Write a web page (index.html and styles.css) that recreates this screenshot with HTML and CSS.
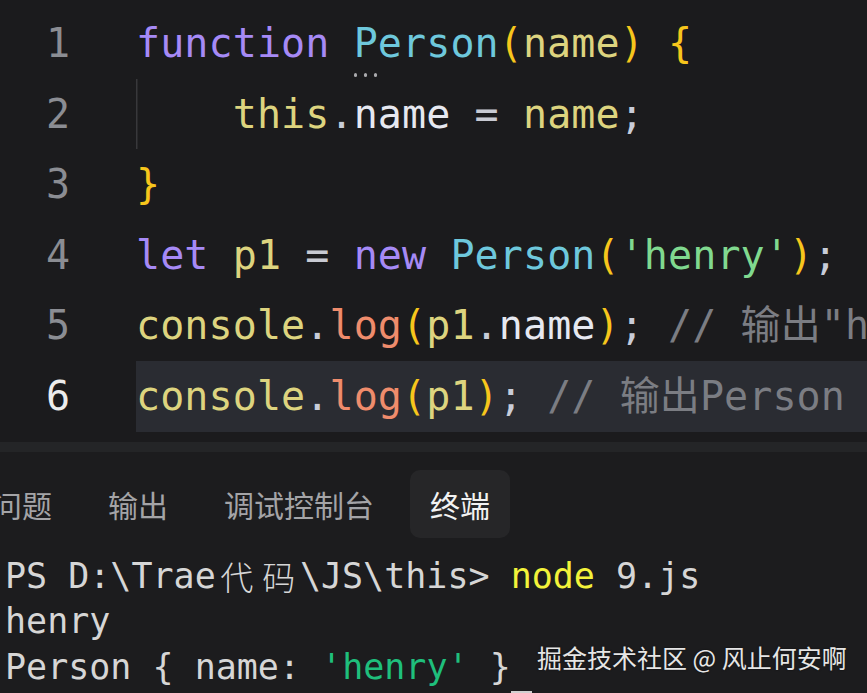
FILE: index.html
```html
<!DOCTYPE html>
<html lang="zh-CN">
<head>
<meta charset="utf-8">
<title>Editor</title>
<link rel="stylesheet" href="styles.css">
</head>
<body>
<div class="screen">
  <div class="editor">
    <div class="line"><span class="ln">1</span><span class="code"><span class="kw">function</span> <span class="fn hint">Person</span><span class="br">(</span><span class="pa">name</span><span class="br">)</span> <span class="br">{</span></span></div>
    <div class="line"><span class="ln">2</span><span class="code"><span class="indent">    </span><span class="pa">this</span><span class="pu">.</span><span class="pr">name</span> <span class="op">=</span> <span class="pa">name</span><span class="pu">;</span></span></div>
    <div class="line"><span class="ln">3</span><span class="code"><span class="br">}</span></span></div>
    <div class="line"><span class="ln">4</span><span class="code"><span class="kw">let</span> <span class="pa">p1</span> <span class="op">=</span> <span class="kw">new</span> <span class="fn">Person</span><span class="br">(</span><span class="st">'henry'</span><span class="br">)</span><span class="pu">;</span></span></div>
    <div class="line"><span class="ln">5</span><span class="code"><span class="pa">console</span><span class="pu">.</span><span class="lg">log</span><span class="br">(</span><span class="pa">p1</span><span class="pu">.</span><span class="pr">name</span><span class="br">)</span><span class="pu">;</span> <span class="cm">// 输出"henry"</span></span></div>
    <div class="line active"><span class="ln">6</span><span class="code"><span class="pa">console</span><span class="pu">.</span><span class="lg">log</span><span class="br">(</span><span class="pa">p1</span><span class="br">)</span><span class="pu">;</span> <span class="cm">// 输出Person { name: 'henry' }</span></span></div>
  </div>
  <div class="sep"></div>
  <div class="panel">
    <div class="tabs">
      <div class="tab">问题</div>
      <div class="tab">输出</div>
      <div class="tab">调试控制台</div>
      <div class="tab active">终端</div>
    </div>
    <div class="terminal">
      <div class="tline">PS D:\Trae<span class="wide">代</span><span class="wide">码</span>\JS\this&gt; <span class="ty">node</span> 9.js</div>
      <div class="tline">henry</div>
      <div class="tline">Person { name: <span class="tg">'henry'</span> }</div>
      <div class="tline"><span class="ghost">PS D:\Trae<span class="wide">代</span><span class="wide">码</span>\JS\this&gt; </span><span class="cursor"></span></div>
    </div>
  </div>
  <div class="watermark">掘金技术社区 @ 风止何安啊</div>
</div>
</body>
</html>
```

FILE: styles.css
```css
html, body {
  margin: 0;
  padding: 0;
  background: #1c1c1e;
}

.screen {
  position: relative;
  width: 867px;
  height: 693px;
  overflow: hidden;
  background: #1c1c1e;
}

.editor {
  padding-top: 8px;
  padding-bottom: 10px;
  background: #1b1b1d;
  font-family: "DejaVu Sans Mono", "Noto Sans CJK SC", monospace;
  font-size: 40px;
  letter-spacing: 0.1px;
}

.line {
  display: flex;
  height: 70.6px;
  line-height: 70.6px;
  white-space: pre;
}

.ln {
  flex: 0 0 136px;
  box-sizing: border-box;
  padding-left: 46px;
  color: #8b8d93;
}

.code {
  flex: 1;
  color: #e4e6ee;
}

.line.active .ln { color: #ececec; }
.line.active .code { background: #2a2c32; }

.kw { color: #a68af6; }
.fn { color: #6ec8dc; }
.br { color: #f7c61c; }
.pa { color: #ddd47f; }
.pr { color: #e6e8f0; }
.op { color: #c8cad2; }
.pu { color: #c8ccd8; }
.st { color: #80d98f; }
.lg { color: #ef8c6c; }
.cm { color: #7b7d83; }

.hint { position: relative; }
.hint::after {
  content: "";
  position: absolute;
  left: 0;
  top: 53px;
  width: 3.5px;
  height: 3.5px;
  border-radius: 50%;
  background: #a9a9ac;
  box-shadow: 10px 0 0 #a9a9ac, 20px 0 0 #a9a9ac;
}

.indent {
  display: inline-block;
  height: 70px;
  vertical-align: top;
  box-shadow: inset 1.5px 0 0 #38383b;
}

.sep {
  height: 10px;
  background: #242527;
}

.panel {
  padding-top: 18px;
}

.tabs {
  display: flex;
  gap: 16px;
  margin-left: -28px;
  height: 68px;
}

.tab {
  display: flex;
  align-items: center;
  padding: 0 20px;
  border-radius: 10px;
  font-family: "Noto Sans CJK SC", sans-serif;
  font-size: 30px;
  color: #a4a4a7;
}

.tab.active {
  background: #262628;
  color: #f2f2f2;
}

.terminal {
  margin-top: 16px;
  padding-left: 5px;
  font-family: "DejaVu Sans Mono", "Noto Sans CJK SC", monospace;
  font-size: 35px;
  color: #d6d6d6;
}

.tline {
  height: 45.5px;
  line-height: 45.5px;
  white-space: pre;
}

.wide {
  display: inline-block;
  width: 42.1px;
  height: 45.5px;
  vertical-align: top;
  text-align: center;
  font-family: "Noto Sans CJK SC", sans-serif;
  font-size: 33px;
  font-weight: 300;
}

.ty { color: #f3f33a; }
.tg { color: #1fbf7c; }

.ghost { visibility: hidden; }

.cursor {
  display: inline-block;
  width: 21px;
  height: 40px;
  vertical-align: top;
  margin-top: 1px;
  background: #d0d0d0;
}

.watermark {
  position: absolute;
  left: 537px;
  top: 642px;
  font-family: "Noto Sans CJK SC", sans-serif;
  font-size: 25px;
  line-height: 30px;
  color: #e6e6e6;
  text-shadow: 0 0 2px rgba(0, 0, 0, 0.6);
}
```
